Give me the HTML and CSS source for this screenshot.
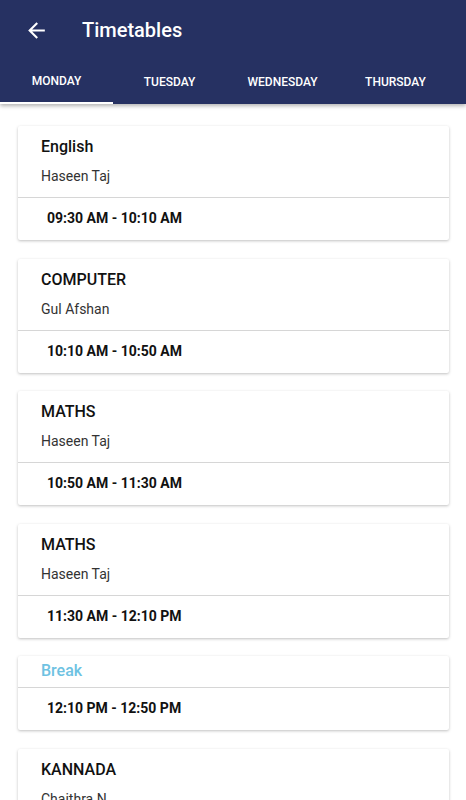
FILE: index.html
```html
<!DOCTYPE html>
<html lang="en">
<head>
    <meta charset="UTF-8">
    <meta name="viewport" content="width=device-width, initial-scale=1.0">
    <title>Timetables</title>
    <link rel="stylesheet" href="styles.css">
</head>
<body>
    <div id="header">
        <div class="toolbar">
            <svg class="back" viewBox="0 0 24 24" width="25" height="25">
                <path d="M20 11H7.83l5.59-5.59L12 4l-8 8 8 8 1.41-1.41L7.83 13H20v-2z" fill="#fff"/>
            </svg>
            <span class="title">Timetables</span>
        </div>
        <div class="tabs">
            <div class="tab active">MONDAY</div>
            <div class="tab">TUESDAY</div>
            <div class="tab">WEDNESDAY</div>
            <div class="tab">THURSDAY</div>
        </div>
    </div>

    <div id="list">
        <div class="card">
            <div class="top">
                <div class="subject">English</div>
                <div class="teacher">Haseen Taj</div>
            </div>
            <div class="time">09:30 AM - 10:10 AM</div>
        </div>
        <div class="card">
            <div class="top">
                <div class="subject">COMPUTER</div>
                <div class="teacher">Gul Afshan</div>
            </div>
            <div class="time">10:10 AM - 10:50 AM</div>
        </div>
        <div class="card">
            <div class="top">
                <div class="subject">MATHS</div>
                <div class="teacher">Haseen Taj</div>
            </div>
            <div class="time">10:50 AM - 11:30 AM</div>
        </div>
        <div class="card">
            <div class="top">
                <div class="subject">MATHS</div>
                <div class="teacher">Haseen Taj</div>
            </div>
            <div class="time">11:30 AM - 12:10 PM</div>
        </div>
        <div class="card">
            <div class="top break">
                <div class="subject">Break</div>
            </div>
            <div class="time">12:10 PM - 12:50 PM</div>
        </div>
        <div class="card">
            <div class="top">
                <div class="subject">KANNADA</div>
                <div class="teacher">Chaithra N</div>
            </div>
            <div class="time">12:50 PM - 01:30 PM</div>
        </div>
    </div>
</body>
</html>
```

FILE: styles.css
```css
body {
    margin: 0;
    font-family: Roboto, "Liberation Sans", sans-serif;
    background-color: #fff;
    overflow: hidden;
}
#header {
    background-color: #263162;
    height: 104px;
    box-shadow: 0 2px 4px rgba(0, 0, 0, 0.3);
    position: relative;
    z-index: 1;
}
.toolbar {
    height: 60px;
    display: flex;
    align-items: center;
}
.back {
    margin-left: 24px;
    margin-right: 33px;
}
.title {
    color: #fff;
    font-size: 20px;
    font-weight: 500;
}
.tabs {
    display: flex;
    height: 44px;
}
.tab {
    width: 113px;
    flex-shrink: 0;
    text-align: center;
    color: #fff;
    font-size: 12px;
    font-weight: 500;
    line-height: 44px;
    box-sizing: border-box;
}
.tab.active {
    border-bottom: 2px solid #fff;
    line-height: 42px;
}
#list {
    padding: 22px 17px 0 18px;
    display: flex;
    flex-direction: column;
    gap: 18.5px;
}
.card {
    background-color: #fff;
    border-radius: 2px;
    box-shadow: 0 1px 3px rgba(0, 0, 0, 0.25);
}
.top {
    padding: 11px 23px 11px 23px;
    border-bottom: 1px solid #d6d6d6;
}
.subject {
    font-size: 16px;
    font-weight: 500;
    color: #111;
    line-height: 20px;
}
.teacher {
    margin-top: 9px;
    font-size: 14px;
    color: #333;
    line-height: 20px;
}
.break {
    padding: 5px 23px 6px 23px;
}
.break .subject {
    color: #6ec2e2;
}
.time {
    padding: 10px 29px 12px 29px;
    font-size: 14px;
    font-weight: 700;
    color: #111;
    line-height: 20px;
}
```
